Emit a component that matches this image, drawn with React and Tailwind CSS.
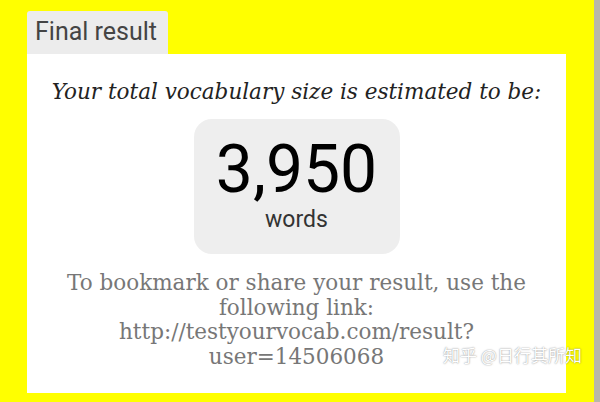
import React from 'react';

const serif = { fontFamily: '"DejaVu Serif", "Liberation Serif", serif' };

const App = () => {
  return (
    <div className="w-[600px] h-[402px] bg-[#ffff00] flex overflow-hidden relative">
      <div className="flex flex-col pl-[27px] pt-[11px] w-[566px]">
        {/* Tab */}
        <div
          className="self-start bg-[#ececec] rounded-t-[3px] h-[43px] w-[141px] pl-[8px] pt-[5px] text-[25px] text-[#444] leading-[32px]"
          style={{ fontFamily: 'Roboto, sans-serif' }}
        >
          Final result
        </div>

        {/* Card */}
        <div className="bg-white w-[539px] h-[339px] flex flex-col items-center pt-[24px]">
          <p className="italic text-[21.5px] text-[#222] leading-[28px]" style={serif}>
            Your total vocabulary size is estimated to be:
          </p>

          <div
            className="mt-[13px] w-[206px] h-[135px] bg-[#eeeeee] rounded-[18px] flex flex-col items-center pt-[19px]"
            style={{ fontFamily: 'Roboto, sans-serif' }}
          >
            <div className="text-[66px] leading-[64px] text-black">3,950</div>
            <div className="mt-[5px] text-[23px] leading-[26px] text-[#333]">words</div>
          </div>

          <p
            className="mt-[17px] w-[490px] text-center text-[21.5px] leading-[24.5px] text-[#777]"
            style={serif}
          >
            To bookmark or share your result, use the following link:
            <br />
            http://testyourvocab.com/result?
            <br />
            user=14506068
          </p>
        </div>
      </div>

      {/* right edge strip */}
      <div className="absolute right-0 top-0 w-[6px] h-full bg-[#b8b8a8]" />

      {/* watermark */}
      <div
        className="absolute left-[443px] top-[342px] text-[17px] text-white"
        style={{ fontFamily: '"Noto Sans CJK SC", sans-serif', textShadow: '0 0 1.5px rgba(0,0,0,0.55)' }}
      >
        知乎 @日行其所知
      </div>
    </div>
  );
};

export default App;
